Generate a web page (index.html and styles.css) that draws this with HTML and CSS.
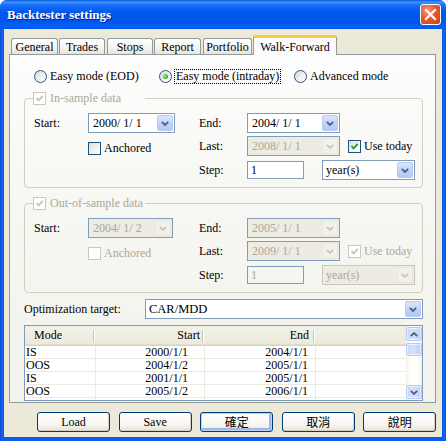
FILE: index.html
```html
<!DOCTYPE html>
<html>
<head>
<meta charset="utf-8">
<link rel="stylesheet" href="styles.css">
</head>
<body>
<div class="window">
  <div class="titlebar">
    <span class="title">Backtester settings</span>
    <span class="close"><svg width="13" height="13" viewBox="0 0 13 13"><path d="M2 2 L11 11 M11 2 L2 11" stroke="#fff" stroke-width="2.2" stroke-linecap="square"/></svg></span>
  </div>
  <div class="client">
    <div class="tabs">
      <div class="tab t-general">General</div>
      <div class="tab t-trades">Trades</div>
      <div class="tab t-stops">Stops</div>
      <div class="tab t-report">Report</div>
      <div class="tab t-portfolio">Portfolio</div>
      <div class="tab tab-sel t-wf">Walk-Forward</div>
    </div>
    <div class="panel">
      <div class="modes">
        <div class="mode m1"><span class="radio"></span><span class="mlabel">Easy mode (EOD)</span></div>
        <div class="mode m2"><span class="radio"><span class="dot"></span></span><span class="mlabel focus">Easy mode (intraday)</span></div>
        <div class="mode m3"><span class="radio"></span><span class="mlabel">Advanced mode</span></div>
      </div>

      <fieldset class="group">
        <legend><span class="chk chk-dis"><svg width="11" height="11" viewBox="0 0 11 11"><path d="M2.5 5 L4.5 7.3 L8.7 3" fill="none" stroke="#C6C4B6" stroke-width="1.8"/></svg></span><span class="gtext">In-sample data</span></legend>
        <div class="rows">
          <div class="row">
            <span class="c1">Start:</span>
            <div class="c2"><div class="combo w87"><span class="val">2000/ 1/ 1</span><span class="dd"><svg width="8" height="5" viewBox="0 0 8 5"><path d="M0.8 0.8 L4 4 L7.2 0.8" fill="none" stroke="#4D6185" stroke-width="1.8"/></svg></span></div></div>
            <span class="c3">End:</span>
            <div class="c4"><div class="combo w93"><span class="val">2004/ 1/ 1</span><span class="dd"><svg width="8" height="5" viewBox="0 0 8 5"><path d="M0.8 0.8 L4 4 L7.2 0.8" fill="none" stroke="#4D6185" stroke-width="1.8"/></svg></span></div></div>
          </div>
          <div class="row row2">
            <span class="c1"></span>
            <div class="c2 anch"><span class="chk"></span><span class="clabel">Anchored</span></div>
            <span class="c3">Last:</span>
            <div class="c4"><div class="combo w93 combo-dis"><span class="val">2008/ 1/ 1</span><span class="dd"><svg width="8" height="5" viewBox="0 0 8 5"><path d="M0.8 0.8 L4 4 L7.2 0.8" fill="none" stroke="#C9C7BA" stroke-width="1.8"/></svg></span></div><span class="chk today"><svg width="11" height="11" viewBox="0 0 11 11"><path d="M2.5 5 L4.5 7.3 L8.7 3" fill="none" stroke="#21A121" stroke-width="1.8"/></svg></span><span class="clabel">Use today</span></div>
          </div>
          <div class="row row3">
            <span class="c1"></span>
            <div class="c2"></div>
            <span class="c3">Step:</span>
            <div class="c4"><div class="input">1</div><div class="combo w93 yr"><span class="val">year(s)</span><span class="dd"><svg width="8" height="5" viewBox="0 0 8 5"><path d="M0.8 0.8 L4 4 L7.2 0.8" fill="none" stroke="#4D6185" stroke-width="1.8"/></svg></span></div></div>
          </div>
        </div>
      </fieldset>

      <fieldset class="group group2">
        <legend><span class="chk chk-dis"><svg width="11" height="11" viewBox="0 0 11 11"><path d="M2.5 5 L4.5 7.3 L8.7 3" fill="none" stroke="#C6C4B6" stroke-width="1.8"/></svg></span><span class="gtext">Out-of-sample data</span></legend>
        <div class="rows">
          <div class="row">
            <span class="c1">Start:</span>
            <div class="c2"><div class="combo w85 combo-dis"><span class="val">2004/ 1/ 2</span><span class="dd"><svg width="8" height="5" viewBox="0 0 8 5"><path d="M0.8 0.8 L4 4 L7.2 0.8" fill="none" stroke="#C9C7BA" stroke-width="1.8"/></svg></span></div></div>
            <span class="c3">End:</span>
            <div class="c4"><div class="combo w93 combo-dis"><span class="val">2005/ 1/ 1</span><span class="dd"><svg width="8" height="5" viewBox="0 0 8 5"><path d="M0.8 0.8 L4 4 L7.2 0.8" fill="none" stroke="#C9C7BA" stroke-width="1.8"/></svg></span></div></div>
          </div>
          <div class="row row2">
            <span class="c1"></span>
            <div class="c2 anch"><span class="chk chk-dis"></span><span class="clabel dis">Anchored</span></div>
            <span class="c3">Last:</span>
            <div class="c4"><div class="combo w93 combo-dis"><span class="val">2009/ 1/ 1</span><span class="dd"><svg width="8" height="5" viewBox="0 0 8 5"><path d="M0.8 0.8 L4 4 L7.2 0.8" fill="none" stroke="#C9C7BA" stroke-width="1.8"/></svg></span></div><span class="chk chk-dis today"><svg width="11" height="11" viewBox="0 0 11 11"><path d="M2.5 5 L4.5 7.3 L8.7 3" fill="none" stroke="#C6C4B6" stroke-width="1.8"/></svg></span><span class="clabel dis">Use today</span></div>
          </div>
          <div class="row row3">
            <span class="c1"></span>
            <div class="c2"></div>
            <span class="c3">Step:</span>
            <div class="c4"><div class="input input-dis">1</div><div class="combo w93 yr combo-dis combo-gray"><span class="val">year(s)</span><span class="dd"><svg width="8" height="5" viewBox="0 0 8 5"><path d="M0.8 0.8 L4 4 L7.2 0.8" fill="none" stroke="#C9C7BA" stroke-width="1.8"/></svg></span></div></div>
          </div>
        </div>
      </fieldset>

      <div class="opt">
        <span class="optlabel">Optimization target:</span>
        <div class="combo w278"><span class="val">CAR/MDD</span><span class="dd"><svg width="8" height="5" viewBox="0 0 8 5"><path d="M0.8 0.8 L4 4 L7.2 0.8" fill="none" stroke="#4D6185" stroke-width="1.8"/></svg></span></div>
      </div>

      <div class="list">
        <div class="lv">
          <div class="lv-head">
            <div class="hc hc-mode">Mode</div>
            <div class="hc hc-start">Start</div>
            <div class="hc hc-end">End</div>
            <div class="hc hc-rest"></div>
          </div>
          <div class="lv-row"><div class="cell c-mode">IS</div><div class="cell c-start">2000/1/1</div><div class="cell c-end">2004/1/1</div><div class="cell c-rest"></div></div>
          <div class="lv-row"><div class="cell c-mode">OOS</div><div class="cell c-start">2004/1/2</div><div class="cell c-end">2005/1/1</div><div class="cell c-rest"></div></div>
          <div class="lv-row"><div class="cell c-mode">IS</div><div class="cell c-start">2001/1/1</div><div class="cell c-end">2005/1/1</div><div class="cell c-rest"></div></div>
          <div class="lv-row"><div class="cell c-mode">OOS</div><div class="cell c-start">2005/1/2</div><div class="cell c-end">2006/1/1</div><div class="cell c-rest"></div></div>
          <div class="lv-row"><div class="cell c-mode">IS</div><div class="cell c-start">2002/1/1</div><div class="cell c-end">2006/1/1</div><div class="cell c-rest"></div></div>
        </div>
        <div class="vscroll">
          <div class="sbtn"><svg width="8" height="5" viewBox="0 0 8 5"><path d="M0.8 4.2 L4 1 L7.2 4.2" fill="none" stroke="#4D6185" stroke-width="1.8"/></svg></div>
          <div class="thumb"></div>
          <div class="sbtn sdown"><svg width="8" height="5" viewBox="0 0 8 5"><path d="M0.8 0.8 L4 4 L7.2 0.8" fill="none" stroke="#4D6185" stroke-width="1.8"/></svg></div>
        </div>
      </div>
    </div>
    <div class="buttons">
      <div class="btn">Load</div>
      <div class="btn">Save</div>
      <div class="btn btn-def cjk">確定</div>
      <div class="btn cjk">取消</div>
      <div class="btn cjk">說明</div>
    </div>
  </div>
</div>
</body>
</html>
```
FILE: styles.css
```css
* { box-sizing: border-box; }
html, body { margin: 0; padding: 0; }
body {
  width: 446px; height: 441px; overflow: hidden; background: #ffffff;
  font-family: "Liberation Serif", "Noto Sans CJK TC", serif;
  font-size: 12px; color: #000;
}
.window {
  width: 446px; height: 441px; display: flex; flex-direction: column;
  background: linear-gradient(90deg, #0733C9 0, #166AEE 1px, #0A5BEA 3px, #0A5BEA 443px, #166AEE 445px, #0733C9 446px);
  border-radius: 7px 7px 0 0; overflow: hidden;
}
.titlebar {
  height: 29px; flex: none; display: flex; align-items: center;
  padding: 0 5px 0 7px;
  background: linear-gradient(#0A5BDC 0, #3D95FF 2px, #1A6FF8 5px, #0058EE 12px, #0055E8 22px, #0062FB 26px, #0154E4 29px);
}
.title {
  color: #fff; font-weight: bold; font-size: 13px;
  text-shadow: 1px 1px 0 #0A1E8C;
}
.close {
  margin-left: auto; width: 21px; height: 21px;
  border: 1px solid #fff; border-radius: 3px;
  background: radial-gradient(circle at 35% 30%, #F29A7D 0, #E45A2E 45%, #C9401A 100%);
  display: flex; align-items: center; justify-content: center;
}
.client {
  flex: none; width: 438px; height: 408px; margin-left: 4px;
  background: #ECE9D8; padding-top: 6px;
}
.tabs { height: 19px; display: flex; align-items: flex-end; padding-left: 7px; }
.tab {
  height: 16px; border: 1px solid #919B9C; border-bottom: none;
  border-radius: 3px 3px 0 0;
  background: linear-gradient(#FFFFFF, #F3F3EF 60%, #E6E4DA);
  display: flex; align-items: center; justify-content: center;
  line-height: 12px; padding-top: 1px;
}
.t-general { width: 47px; }
.t-trades { width: 46px; margin-left: 1px; }
.t-stops { width: 46px; margin-left: 2px; }
.t-report { width: 47px; margin-left: 1px; }
.t-portfolio { width: 49px; margin-left: 2px; }
.tab-sel {
  width: 84px; margin-left: 1px; height: 20px; margin-bottom: -1px;
  position: relative; z-index: 1;
  border-top: 3px solid #FFC83C; border-color: #FFC83C #919B9C #919B9C #919B9C;
  background: #FCFCFE; padding-top: 0;
}
.panel {
  margin-left: 5px; width: 427px; height: 349px;
  border: 1px solid #919B9C;
  background: linear-gradient(#FDFDFD, #F7F7F3 40%, #F3F2EC);
  padding: 0 12px 0 14px;
}
.modes { margin-top: 13px; height: 16px; display: flex; align-items: center; padding-left: 10px; }
.mode { display: flex; align-items: center; height: 16px; }
.m1 { width: 125px; }
.m2 { width: 135px; }
.radio {
  width: 13px; height: 13px; border-radius: 50%;
  border: 1px solid #2A5182;
  background: linear-gradient(135deg, #D8D8D1 0%, #F2F2EE 55%, #FFFFFF 100%);
  display: flex; align-items: center; justify-content: center; flex: none;
}
.dot {
  width: 5px; height: 5px; border-radius: 50%;
  background: radial-gradient(circle at 40% 40%, #A6EB9A 0, #3CB73C 55%, #1E941E 100%);
}
.mlabel { margin-left: 3px; line-height: 14px; }
.focus { margin-left: 2px; padding: 0 1px; border: 1px dotted #000; line-height: 13px; }

.group {
  margin: 8px 0 0 0; padding: 8px 0 7px 0; width: 399px;
  border: 1px solid #D0D0BF; border-radius: 4px; min-width: 0;
}
.group2 { margin-top: 9px; }
.group legend {
  margin-left: 8px; padding: 0; width: 112px; height: 13px;
  display: flex; align-items: center;
}
.gtext { margin-left: 4px; color: #ACA899; line-height: 13px; }
.rows { padding-left: 9px; }
.row { display: flex; align-items: center; height: 20px; }
.row2 { margin-top: 3px; }
.row3 { margin-top: 4px; }
.c1 { width: 54px; flex: none; }
.c2 { width: 111px; flex: none; display: flex; align-items: center; height: 20px; }
.c3 { width: 48px; flex: none; }
.c4 { flex: 1; display: flex; align-items: center; height: 20px; }
.anch { align-items: flex-end; }
.anch .chk { margin-bottom: 1px; }
.anch .clabel { margin-bottom: 1px; }

.chk {
  width: 13px; height: 13px; flex: none;
  border: 1px solid #1C5180;
  background: linear-gradient(135deg, #DCDCD7 0%, #F4F4F0 60%, #FFFFFF 100%);
  display: flex; align-items: center; justify-content: center;
}
.chk-dis { border-color: #CAC8BB; background: #FFFFFF; }
.clabel { margin-left: 3px; line-height: 13px; }
.dis { color: #ACA899; }
.today { margin-left: 8px; }

.combo {
  height: 20px; border: 1px solid #7F9DB9; background: #fff;
  display: flex; align-items: center; padding: 1px; flex: none;
}
.w87 { width: 87px; }
.w85 { width: 85px; }
.w93 { width: 93px; }
.w278 { width: 278px; }
.val { flex: 1; padding-left: 3px; line-height: 14px; white-space: pre; }
.yr .val { padding-left: 2px; }
.w278 .val { padding-left: 2px; font-size: 12.5px; }
.dd {
  width: 16px; height: 16px; flex: none; border-radius: 2px;
  border: 1px solid #B9CBF3;
  background: linear-gradient(#DCE6FD, #C2D3FA 50%, #B3C8F6);
  display: flex; align-items: center; justify-content: center;
}
.combo-dis { background: #EDEBE2; color: #ACA899; }
.combo-dis .dd { border-color: #E8E7DE; background: #F1F0EA; }
.combo-gray { border-color: #C9C7BA; }
.input {
  width: 57px; height: 18px; border: 1px solid #7F9DB9; background: #fff;
  padding-left: 3px; line-height: 16px; flex: none; margin-right: 18px;
}
.input-dis { background: #F6F5F1; color: #ACA899; }

.opt { margin-top: 6px; height: 20px; display: flex; align-items: center; }
.optlabel { width: 121px; flex: none; }

.list {
  margin-top: 6px; width: 399px; height: 76px;
  border: 1px solid #7F9DB9; background: #fff;
  display: flex; overflow: hidden;
}
.lv { flex: 1; overflow: hidden; }
.lv-head {
  height: 20px; display: flex;
  background: linear-gradient(#F2F1E8, #EBEADB);
  border-bottom: 1px solid #D6D2C2;
  box-shadow: inset 0 -1px 0 #E2DECD;
}
.hc {
  height: 19px; display: flex; align-items: center; flex: none;
  background:
    linear-gradient(#C7C5B2, #C7C5B2) right 1px top 4px / 1px 12px no-repeat,
    linear-gradient(#FFFFFF, #FFFFFF) right 0 top 4px / 1px 12px no-repeat;
}
.hc-mode { width: 70px; padding-left: 9px; }
.hc-start { width: 109px; justify-content: flex-end; padding-right: 4px; }
.hc-end { width: 111px; justify-content: flex-end; padding-right: 6px; }
.hc-rest { flex: 1; background: none; }
.lv-row { height: 13px; display: flex; border-bottom: 1px solid #EDEBDF; }
.cell { height: 12px; line-height: 12px; flex: none; border-right: 1px solid #EDEBDF; }
.c-mode { width: 71px; padding-left: 1px; }
.c-start { width: 109px; text-align: right; padding-right: 16px; }
.c-end { width: 111px; text-align: right; padding-right: 7px; }
.c-rest { flex: 1; border-right: none; }

.vscroll {
  width: 16px; flex: none; display: flex; flex-direction: column;
  background: linear-gradient(90deg, #F3F1EC, #FEFEFB 30%, #FEFEFB 70%, #F3F1EC);
  padding: 1px 0 1px 0;
}
.sbtn, .thumb {
  width: 16px; height: 14px; flex: none;
  border: 1px solid #B4C8F6; border-radius: 2px;
  background: linear-gradient(90deg, #C8D6FB, #D6E1FC 40%, #BED0F8);
  box-shadow: inset 0 0 0 1px rgba(255,255,255,0.6);
  display: flex; align-items: center; justify-content: center;
}
.thumb { height: 13px; margin-top: 2px; }
.sdown { margin-top: auto; }

.buttons { margin-top: 9px; display: flex; padding-left: 33px; gap: 8.6px; }
.btn {
  width: 73px; height: 20px; border: 1px solid #003C74; border-radius: 3px;
  background: linear-gradient(#FFFFFF, #F5F4EF 70%, #E3E1D6);
  box-shadow: inset -1px -1px 0 #D6D0C5;
  display: flex; align-items: center; justify-content: center;
  line-height: 14px;
}
.cjk { font-family: "Noto Sans CJK TC", sans-serif; font-size: 12px; }
.btn-def { box-shadow: inset 0 0 0 1px #BCD2F5, inset -1px -1px 0 2px #9DB9EB; }
```
